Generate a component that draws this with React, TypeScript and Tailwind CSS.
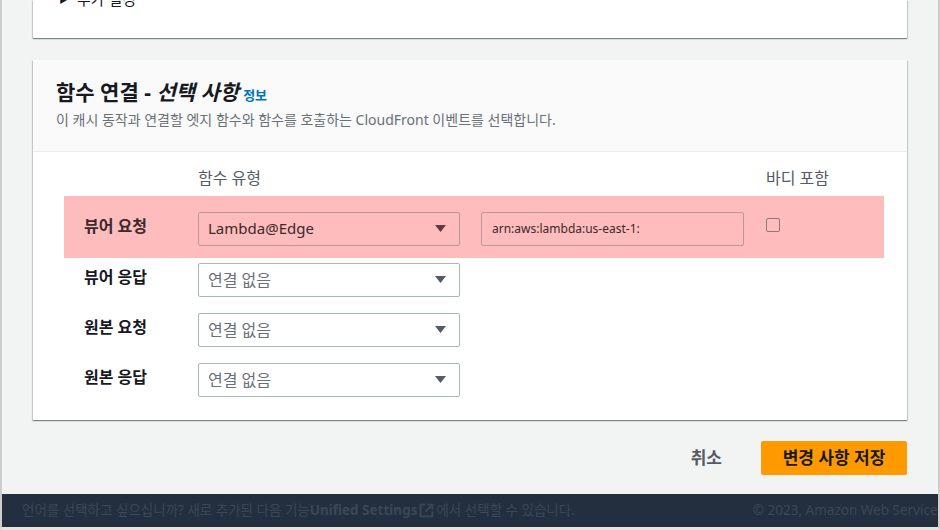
const font = { fontFamily: '"Noto Sans", "Noto Sans CJK KR", sans-serif' };

function Caret({ tint }: { tint?: boolean }) {
  return (
    <svg width="11" height="7" viewBox="0 0 11 7" className="shrink-0">
      <path d="M0 0h11L5.5 7z" fill={tint ? "#5e3b3e" : "#545b64"} />
    </svg>
  );
}

function Select({ value, tint, muted }: { value: string; tint?: boolean; muted?: boolean }) {
  return (
    <div
      className={
        "flex h-[34px] w-[262px] items-center justify-between rounded-[2px] border pl-[9px] pr-[13px] " +
        (tint
          ? "border-[#b89a9b] bg-transparent text-[15px] text-[#3a2a2c]"
          : "border-[#aab7b8] bg-white text-[16px] " + (muted ? "text-[#687078]" : "text-[#16191f]"))
      }
    >
      <span>{value}</span>
      <Caret tint={tint} />
    </div>
  );
}

function Row({ label, children }: { label: string; children?: React.ReactNode }) {
  return (
    <div className="flex items-start px-[20px]">
      <div className="w-[114px] pt-[2px] text-[16px] font-bold text-[#16191f]">{label}</div>
      {children}
    </div>
  );
}

export default function App() {
  return (
    <div
      className="flex h-[530px] w-[940px] flex-col overflow-hidden border-x-2 border-b-[3px] border-x-[#cdcdcd] border-b-[#e4e4e4] bg-[#f2f3f3]"
      style={font}
    >
      <div className="px-[31px]">
        <div className="h-[38px] overflow-hidden bg-white shadow-[0_1px_1px_0_rgba(0,28,36,0.3),1px_1px_1px_0_rgba(0,28,36,0.15),-1px_1px_1px_0_rgba(0,28,36,0.15)]">
          <div className="-mt-[12px] flex items-center gap-[8px] pl-[26px] text-[15px] text-[#16191f]">
            <span className="text-[10px]">▶</span>
            <span>추가 설정</span>
          </div>
        </div>

        <div className="mt-[22px] bg-white shadow-[0_1px_1px_0_rgba(0,28,36,0.3),1px_1px_1px_0_rgba(0,28,36,0.15),-1px_1px_1px_0_rgba(0,28,36,0.15)]">
          <div className="border-b border-[#eaeded] bg-[#fafafa] px-[23px] pt-[19px] pb-[22px]">
            <div className="flex items-baseline gap-[4px]">
              <h2 className="text-[21px] font-bold leading-[26px] text-[#16191f]">
                함수 연결 - <span className="italic">선택 사항</span>
              </h2>
              <a className="text-[13px] font-bold text-[#0073bb]">정보</a>
            </div>
            <p className="mt-[4px] text-[14px] leading-[19px] text-[#687078]">
              이 캐시 동작과 연결할 엣지 함수와 함수를 호출하는 CloudFront 이벤트를 선택합니다.
            </p>
          </div>

          <div className="px-[31px] pt-[16px] pb-[23px] pr-[23px]">
            <div className="flex px-[20px] text-[16px] leading-[20px] text-[#545b64]">
              <div className="w-[114px]" />
              <div className="w-[568px]">함수 유형</div>
              <div>바디 포함</div>
            </div>

            <div className="mt-[8px] flex h-[62px] items-start bg-[#ffbcbc] px-[20px] pt-[16px]">
              <div className="w-[114px] pt-[2px] text-[16px] font-bold text-[#3a2a2c]">뷰어 요청</div>
              <Select value="Lambda@Edge" tint />
              <div className="ml-[21px] flex h-[34px] w-[263px] items-center rounded-[2px] border border-[#b89a9b] px-[10px] text-[12px] text-[#3a2a2c]">
                arn:aws:lambda:us-east-1:
              </div>
              <div className="ml-[22px] mt-[6px] h-[14px] w-[14px] rounded-[2px] border border-[#8f7577]" />
            </div>

            <div className="mt-[5px] flex flex-col gap-[16px]">
              <Row label="뷰어 응답">
                <Select value="연결 없음" muted />
              </Row>
              <Row label="원본 요청">
                <Select value="연결 없음" muted />
              </Row>
              <Row label="원본 응답">
                <Select value="연결 없음" muted />
              </Row>
            </div>
          </div>
        </div>

        <div className="mt-[21px] flex items-center justify-end">
          <button className="px-[20px] text-[17px] font-bold text-[#545b64]">취소</button>
          <button className="ml-[19px] h-[34px] w-[146px] rounded-[2px] bg-[#ff9900] text-[17px] font-bold text-[#16191f]">
            변경 사항 저장
          </button>
        </div>
      </div>

      <div className="mt-auto flex h-[33px] items-center bg-[#232f3e] pl-[20px] text-[13.5px] text-[#3b4757]">
        <div className="flex shrink-0 items-center whitespace-nowrap">
          <span>언어를 선택하고 싶으십니까? 새로 추가된 다음 기능</span>
          <span className="font-bold">Unified Settings</span>
          <svg width="15" height="15" viewBox="0 0 14 14" className="mx-[2px]" fill="none" stroke="#3b4757" strokeWidth="1.8">
            <path d="M6 1.5H1.5v11h11V8" />
            <path d="M8 1.5h4.5V6M12.5 1.5 6 8" />
          </svg>
          <span>에서 선택할 수 있습니다.</span>
        </div>
        <div className="ml-auto -mr-[6px] shrink-0 whitespace-nowrap">© 2023, Amazon Web Services</div>
      </div>
    </div>
  );
}
